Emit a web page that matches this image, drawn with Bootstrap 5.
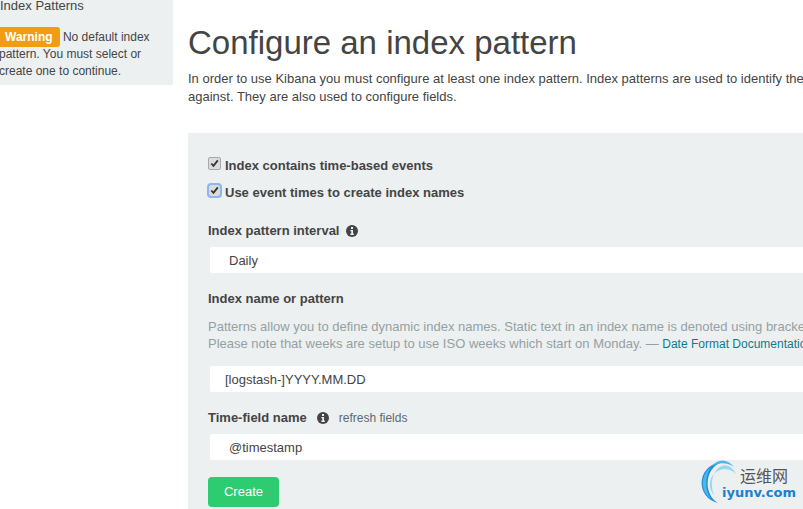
<!DOCTYPE html>
<html lang="en"><head><meta charset="utf-8"><title>Configure an index pattern</title>
<link rel="stylesheet" href="https://cdn.jsdelivr.net/npm/bootstrap@5.3.0/dist/css/bootstrap.min.css">
<style>
html,body{height:509px;overflow:hidden;background:#fff}
body{font-family:"Liberation Sans",Arial,sans-serif;font-size:13px;line-height:20px;color:#444;position:relative}
.pagewrap{width:1300px}
.sidebox{width:178px;margin-left:-5px;margin-top:-4px;height:89px;background:#ecf0f1;padding:0 0 0 5px;flex:none}
.sidetitle{font-size:13px;line-height:20px;color:#444;height:20px;margin-bottom:13px}
.warnrow{font-size:12px;line-height:17px;width:160px;margin-left:-1px;color:#444}
.warnlabel{background:#f39c12;color:#fff;font-weight:700;font-size:12px;border-radius:3px;padding:3px 7px 3px 10px;margin-left:-4px}
.mainarea{margin-left:15px;flex:1}
.pagehead{font-size:33px;line-height:40px;font-weight:400;color:#444;margin:23px 0 7px;white-space:nowrap}
.introtext{font-size:13px;line-height:18px;white-space:nowrap;margin-bottom:27px;color:#444}
.formpanel{background:#ecf0f1;padding:22px 20px 0;height:376px}
.chk{appearance:none;width:13px;height:13px;margin:-5px 0 0;border:1px solid #a8a8a8;border-radius:2px;background:#dcdcdc url("data:image/svg+xml,%3Csvg xmlns='http://www.w3.org/2000/svg' viewBox='0 0 12 12'%3E%3Cpath d='M2.5 6l2.4 2.6L9.6 2.6' fill='none' stroke='%23333' stroke-width='2'/%3E%3C/svg%3E") center/11px no-repeat;flex:none}
.chk.focused{outline:2px solid #8fb4f2;outline-offset:-1px;border-radius:3px;border-color:#8fb4f2}
.chkrow{display:flex;align-items:center;gap:4px;font-weight:700;font-size:13px;color:#444;height:20px;padding-top:2px;white-space:nowrap}
.chkrow.firstrow{margin-bottom:7px}
.fieldlabel{font-weight:700;font-size:13px;line-height:20px;height:18px;color:#444;white-space:nowrap;display:flex;align-items:flex-start}
.label-interval{margin-top:19px;margin-bottom:8px;gap:7px}
.label-pattern{margin-bottom:11px}
.label-time{margin-bottom:8px;gap:7px}
.whitebar{background:#fff;height:26px;width:620px;border-radius:2px;margin-left:2px;font-size:13px;line-height:28px;color:#444;padding-left:19px}
.whitebar.inputbar{padding-left:15px}
.gap16{margin-bottom:16px}
.gap17{margin-bottom:17px}
.helptext{font-size:13px;line-height:17px;color:#95a0a2;white-space:nowrap;margin:1px 0 13px}
.doclink{color:#0f7a8f;text-decoration:none;font-size:12px}
.infoicon{display:block;width:12px;height:12px;flex:none;margin-top:4px}
.timeicon{margin-left:3px}
.refreshlink{font-weight:400;font-size:12px;color:#5a6a70;margin-left:3px}
.createbtn{background:#2ecc71;color:#fff;font-size:13px;line-height:18px;border:0;border-radius:4px;width:71px;height:30px;padding:0}
.stampmark{position:absolute;left:697px;top:460px;width:106px;height:46px}
.stampcn{position:absolute;left:43px;top:5px;font-family:"Noto Sans CJK SC",sans-serif;font-size:16px;line-height:20px;color:#555;white-space:nowrap}
.stampen{position:absolute;left:25px;top:25px;font-family:"DejaVu Sans",sans-serif;font-weight:700;font-size:13px;line-height:16px;color:#1a80d0;white-space:nowrap}
</style></head>
<body>
<div class="pagewrap d-flex align-items-start">
  <aside class="sidebox">
    <div class="sidetitle">Index Patterns</div>
    <div class="warnrow"><span class="warnlabel">Warning</span> No default index pattern. You must select or create one to continue.</div>
  </aside>
  <main class="mainarea">
    <h1 class="pagehead">Configure an index pattern</h1>
    <p class="introtext">In order to use Kibana you must configure at least one index pattern. Index patterns are used to identify the Elasticsearch index to run search and analytics<br>against. They are also used to configure fields.</p>
    <form class="formpanel">
      <label class="chkrow firstrow"><input class="chk" type="checkbox" checked> Index contains time-based events</label>
      <label class="chkrow"><input class="chk focused" type="checkbox" checked> Use event times to create index names</label>
      <div class="fieldlabel label-interval">Index pattern interval
        <svg class="infoicon" viewBox="0 0 12 12"><circle cx="6" cy="6" r="6" fill="#444"/><rect x="5" y="2" width="2" height="2" fill="#ecf0f1"/><path d="M4.4 5h2.6v3.6h.8V10H4.4V8.6h.9V6.3h-.9z" fill="#ecf0f1"/></svg>
      </div>
      <div class="whitebar gap16">Daily</div>
      <div class="fieldlabel label-pattern">Index name or pattern</div>
      <div class="helptext">Patterns allow you to define dynamic index names. Static text in an index name is denoted using brackets. Example: [logstash-]YYYY.MM.DD.<br>Please note that weeks are setup to use ISO weeks which start on Monday. — <a class="doclink" href="#">Date Format Documentation</a></div>
      <div class="whitebar inputbar gap16">[logstash-]YYYY.MM.DD</div>
      <div class="fieldlabel label-time">Time-field name
        <svg class="infoicon timeicon" viewBox="0 0 12 12"><circle cx="6" cy="6" r="6" fill="#444"/><rect x="5" y="2" width="2" height="2" fill="#ecf0f1"/><path d="M4.4 5h2.6v3.6h.8V10H4.4V8.6h.9V6.3h-.9z" fill="#ecf0f1"/></svg>
        <span class="refreshlink">refresh fields</span>
      </div>
      <div class="whitebar gap17">@timestamp</div>
      <button class="btn createbtn" type="button">Create</button>
    </form>
  </main>
</div>
<div class="stampmark">
  <svg width="46" height="46" viewBox="0 0 46 46" class="d-block"><g transform="translate(-3 0)"><path d="M30 2.500A20.500 20.500 0 0 0 24 43A16.500 21 0 0 1 30 2.500z" fill="#1f8fdc"/><path d="M40 7A19 19 0 0 0 17 39A16 22 0 0 1 40 7z" fill="#4fb6ea"/><path d="M42 14A15 15 0 0 0 20 35A13 19 0 0 1 42 14z" fill="#9ad6f4"/></g></svg>
  <span class="stampcn">运维网</span>
  <span class="stampen">iyunv.com</span>
</div>
</body></html>
